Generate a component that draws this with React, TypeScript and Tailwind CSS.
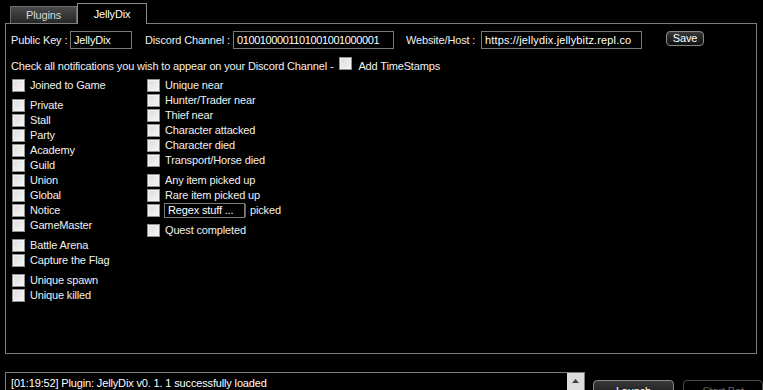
import React from 'react';

type Group = string[];

const LEFT_GROUPS: Group[] = [
  ['Joined to Game'],
  ['Private', 'Stall', 'Party', 'Academy', 'Guild', 'Union', 'Global', 'Notice', 'GameMaster'],
  ['Battle Arena', 'Capture the Flag'],
  ['Unique spawn', 'Unique killed'],
];

const RIGHT_GROUPS: Group[] = [
  ['Unique near', 'Hunter/Trader near', 'Thief near', 'Character attacked', 'Character died', 'Transport/Horse died'],
  ['Any item picked up', 'Rare item picked up', '__regex__'],
  ['Quest completed'],
];

function Box() {
  return (
    <span className="inline-block w-[13px] h-[13px] shrink-0 border border-[#8e8f8f] bg-gradient-to-br from-[#dcdcdc] to-[#f6f6f6] shadow-[inset_0_0_0_1px_#f4f4f4]" />
  );
}

function CheckRow({ label }: { label: string }) {
  if (label === '__regex__') {
    return (
      <div className="flex items-center h-[15px]">
        <Box />
        <div className="ml-[4px] w-[81px] h-[15px] border border-[#7a7a7a] px-[3px] leading-[13px] text-white whitespace-nowrap">Regex stuff ...</div>
        <span className="w-px h-[13px] bg-[#a0522d]" />
        <span className="ml-[4px]">picked</span>
      </div>
    );
  }
  return (
    <div className="flex items-center h-[15px]">
      <Box />
      <span className="ml-[5px] whitespace-nowrap">{label}</span>
    </div>
  );
}

function Column({ groups, width }: { groups: Group[]; width: string }) {
  return (
    <div className={`flex flex-col gap-[5px] ${width}`}>
      {groups.map((g, i) => (
        <div key={i} className="flex flex-col">
          {g.map((label) => (
            <CheckRow key={label} label={label} />
          ))}
        </div>
      ))}
    </div>
  );
}

function Field({ value, width, tracking }: { value: string; width: string; tracking: string }) {
  return (
    <div className={`${width} ${tracking} h-[18px] shrink-0 border border-[#7a7a7a] px-[3px] leading-[16px] text-white whitespace-nowrap overflow-hidden`}>
      {value}
    </div>
  );
}

export default function App() {
  return (
    <div
      className="w-[763px] h-[390px] bg-black text-[#f0f0f0] text-[11px] tracking-[-0.15px] overflow-hidden flex flex-col"
      style={{ fontFamily: '"Liberation Sans", Arial, sans-serif' }}
    >
      {/* Tabs */}
      <div className="flex items-end shrink-0 pt-[3px] pl-[10px] h-[23px]">
        <div className="w-[67px] h-[17px] border border-b-0 border-[#6c6c6c] bg-gradient-to-b from-[#4b4b4b] to-[#262626] text-[#d8d8d8] flex items-center justify-center">
          Plugins
        </div>
        <div className="relative z-10 -mb-px w-[70px] h-[21px] border border-b-0 border-[#8a8a8a] bg-black text-white flex items-center justify-center">
          JellyDix
        </div>
      </div>

      {/* Panel */}
      <div className="shrink-0 mx-[5px] w-[752px] h-[331px] border border-[#7c7c7c] pl-[5px] pt-[7px]">
        <div className="flex items-center h-[18px]">
          <span className="w-[59px] shrink-0 whitespace-nowrap">Public Key :</span>
          <Field value="JellyDix" width="w-[62px]" tracking="" />
          <span className="ml-[13px] w-[88px] shrink-0 whitespace-nowrap">Discord Channel :</span>
          <Field value="0100100001101001001000001" width="w-[161px]" tracking="tracking-[-0.4px]" />
          <span className="ml-[12px] w-[75px] shrink-0 whitespace-nowrap">Website/Host :</span>
          <Field value="https://jellydix.jellybitz.repl.co" width="w-[161px]" tracking="tracking-[0.15px]" />
          <button className="ml-[24px] -mt-[3px] w-[38px] h-[15px] rounded-[4px] border border-[#8a8a8a] bg-gradient-to-b from-[#3a3a3a] to-[#111] text-white text-[11px] leading-[13px]">
            Save
          </button>
        </div>

        <div className="flex items-center mt-[10px] h-[14px]">
          <span className="whitespace-nowrap">Check all notifications you wish to appear on your Discord Channel -</span>
          <span className="ml-[6px]"><Box /></span>
          <span className="ml-[6px]">Add TimeStamps</span>
        </div>

        <div className="flex mt-[5px] pl-px">
          <Column groups={LEFT_GROUPS} width="w-[135px]" />
          <Column groups={RIGHT_GROUPS} width="w-[200px]" />
        </div>
      </div>

      {/* Bottom */}
      <div className="flex shrink-0 mt-[18px] pl-[5px]">
        <div className="relative w-[582px] h-[30px] border border-[#7c7c7c] pl-[5px] pt-[2px] text-white whitespace-nowrap">
          [01:19:52] Plugin: JellyDix v0. 1. 1 successfully loaded
          <div className="absolute right-0 top-0 w-[17px] h-full bg-[#dcdcdc] flex justify-center pt-[6px]">
            <svg width="7" height="4" viewBox="0 0 7 4"><path d="M3.5 0 L7 4 L0 4 Z" fill="#404040" /></svg>
          </div>
        </div>
        <button className="ml-[8px] mt-[8px] w-[82px] h-[22px] rounded-[4px] border border-[#8a8a8a] bg-gradient-to-b from-[#3a3a3a] to-[#111] text-white flex justify-center pt-[2px]">
          Launch
        </button>
        <button className="ml-[9px] mt-[8px] w-[80px] h-[22px] rounded-[4px] border border-[#4a4a4a] bg-black text-[#6a6a6a] flex justify-center pt-[2px]">
          Start Bot
        </button>
      </div>
    </div>
  );
}
